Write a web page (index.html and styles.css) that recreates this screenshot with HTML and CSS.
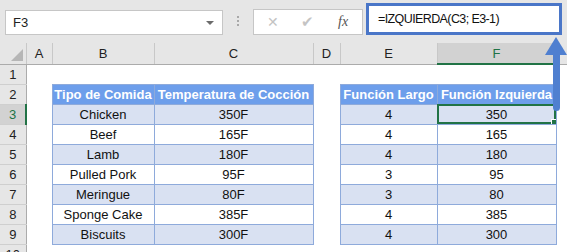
FILE: index.html
```html
<!DOCTYPE html>
<html lang="es">
<head>
  <meta charset="UTF-8">
  <title>IZQUIERDA</title>
  <link rel="stylesheet" href="styles.css">
</head>
<body>
  <div class="toolbar">
    <div class="namebox">
      <span>F3</span>
      <span class="caret"></span>
    </div>
    <div class="grip"><i></i><i></i><i></i></div>
    <div class="buttons">
      <span class="btn cancel">&#x2715;</span>
      <span class="btn ok">&#x2714;</span>
      <span class="btn fx">fx</span>
    </div>
    <div class="formula">=IZQUIERDA(C3; E3-1)</div>
  </div>

  <table class="sheet">
    <colgroup>
      <col class="w-rh"><col class="w-a"><col class="w-b"><col class="w-c">
      <col class="w-d"><col class="w-e"><col class="w-f"><col>
    </colgroup>
    <tr class="colhead">
      <th class="corner"><span class="tri"></span></th>
      <th>A</th><th>B</th><th>C</th><th>D</th><th>E</th><th class="active">F</th><th class="last"></th>
    </tr>
    <tr>
      <th class="rh">1</th><td></td><td></td><td></td><td></td><td></td><td></td><td></td>
    </tr>
    <tr>
      <th class="rh">2</th><td></td>
      <td class="hd">Tipo de Comida</td><td class="hd">Temperatura de Cocción</td>
      <td></td>
      <td class="hd">Función Largo</td><td class="hd">Función Izquierda</td><td></td>
    </tr>
    <tr class="band">
      <th class="rh active">3</th><td></td>
      <td class="t">Chicken</td><td class="t">350F</td><td></td>
      <td class="t">4</td><td class="t sel">350<span class="handle"></span></td><td></td>
    </tr>
    <tr>
      <th class="rh">4</th><td></td>
      <td class="t">Beef</td><td class="t">165F</td><td></td>
      <td class="t">4</td><td class="t">165</td><td></td>
    </tr>
    <tr class="band">
      <th class="rh">5</th><td></td>
      <td class="t">Lamb</td><td class="t">180F</td><td></td>
      <td class="t">4</td><td class="t">180</td><td></td>
    </tr>
    <tr>
      <th class="rh">6</th><td></td>
      <td class="t">Pulled Pork</td><td class="t">95F</td><td></td>
      <td class="t">3</td><td class="t">95</td><td></td>
    </tr>
    <tr class="band">
      <th class="rh">7</th><td></td>
      <td class="t">Meringue</td><td class="t">80F</td><td></td>
      <td class="t">3</td><td class="t">80</td><td></td>
    </tr>
    <tr>
      <th class="rh">8</th><td></td>
      <td class="t">Sponge Cake</td><td class="t">385F</td><td></td>
      <td class="t">4</td><td class="t">385</td><td></td>
    </tr>
    <tr class="band">
      <th class="rh">9</th><td></td>
      <td class="t">Biscuits</td><td class="t">300F</td><td></td>
      <td class="t">4</td><td class="t">300</td><td></td>
    </tr>
    <tr>
      <th class="rh">10</th><td></td><td></td><td></td><td></td><td></td><td></td><td></td>
    </tr>
  </table>

  <!-- arrow pointing from F3 up to the formula -->
  <div class="arrow">
    <span class="head"></span>
    <span class="shaft"></span>
  </div>
</body>
</html>
```

FILE: styles.css
```css
* {
  margin: 0;
  padding: 0;
  box-sizing: border-box;
}

body {
  width: 567px;
  height: 252px;
  overflow: hidden;
  background: #ffffff;
  font-family: "Liberation Sans", Arial, sans-serif;
  color: #000;
  position: relative;
}

/* formula bar */
.toolbar {
  height: 43px;
  background: #e6e6e6;
  display: flex;
  align-items: flex-start;
  padding-left: 5px;
}
.namebox {
  margin-top: 10px;
  width: 218px;
  height: 25px;
  background: #fff;
  border: 1px solid #c6c6c6;
  display: flex;
  align-items: center;
  justify-content: space-between;
  padding: 0 8px 0 7px;
  font-size: 13px;
  color: #222;
}
.caret {
  width: 0;
  height: 0;
  border-left: 4px solid transparent;
  border-right: 4px solid transparent;
  border-top: 4px solid #6b6b6b;
}
.grip {
  width: 30px;
  margin-top: 16px;
  display: flex;
  flex-direction: column;
  align-items: center;
  gap: 2px;
}
.grip i {
  width: 2px;
  height: 2px;
  background: #a8a8a8;
}
.buttons {
  margin-top: 9px;
  width: 110px;
  height: 26px;
  background: #fff;
  border: 1px solid #c6c6c6;
  display: flex;
  align-items: center;
  padding-left: 13px;
}
.btn {
  color: #c4c4c4;
  font-size: 14px;
}
.cancel {
  width: 34px;
}
.ok {
  width: 37px;
  font-size: 15px;
}
.fx {
  color: #555;
  font-family: "Liberation Serif", serif;
  font-style: italic;
  font-size: 14px;
}
.formula {
  margin: 3px 0 0 3px;
  width: 196px;
  height: 32px;
  background: #fff;
  border: 3px solid #4a76c8;
  padding-left: 9px;
  line-height: 26px;
  font-size: 12.5px;
  color: #111;
  letter-spacing: -0.6px;
}

/* worksheet */
.sheet {
  border-collapse: collapse;
  table-layout: fixed;
  width: 567px;
  font-size: 13px;
}
.w-rh { width: 26px; }
.w-a { width: 26px; }
.w-b { width: 102px; }
.w-c { width: 159px; }
.w-d { width: 27px; }
.w-e { width: 97px; }
.w-f { width: 119px; }

.sheet tr {
  height: 20px;
}
.sheet td,
.sheet th {
  padding: 0;
  height: 20px;
  text-align: center;
  white-space: nowrap;
  overflow: hidden;
}

.colhead th {
  height: 21px;
  background: #e6e6e6;
  font-weight: normal;
  font-size: 13px;
  color: #222;
  border-left: 1px solid #c8c8c8;
  border-bottom: 1px solid #ababab;
}
.colhead th.active {
  background: #d2d2d2;
  color: #217346;
  border-bottom: 2px solid #217346;
}
.colhead th.last {
  border-left: 1px solid #c8c8c8;
}
.corner {
  position: relative;
  border-left: none !important;
}
.tri {
  position: absolute;
  right: 3px;
  bottom: 3px;
  width: 0;
  height: 0;
  border-left: 12px solid transparent;
  border-bottom: 12px solid #b6b6b6;
}

.rh {
  background: #e6e6e6;
  font-weight: normal;
  font-size: 13px;
  color: #222;
  border-right: 1px solid #ababab;
  border-bottom: 1px solid #cfcfcf;
}
.rh.active {
  background: #d2d2d2;
  color: #217346;
  border-right: 2px solid #217346;
}

.hd {
  background: #6d9eeb;
  color: #fff;
  font-weight: bold;
  border: 1px solid #8eaadb;
}
.t {
  border: 1px solid #8eaadb;
  color: #111;
}
.band .t {
  background: #d9e1f2;
}

.sel {
  position: relative;
  outline: 2px solid #217346;
  outline-offset: -2px;
}
.handle {
  position: absolute;
  right: -1px;
  bottom: -1px;
  width: 6px;
  height: 6px;
  background: #217346;
  border: 1px solid #fff;
}

/* annotation arrow */
.arrow {
  position: absolute;
  left: 545px;
  top: 37px;
  width: 22px;
  display: flex;
  flex-direction: column;
  align-items: center;
}
.head {
  width: 0;
  height: 0;
  border-left: 11px solid transparent;
  border-right: 11px solid transparent;
  border-bottom: 18px solid #4f7fd0;
}
.shaft {
  width: 7px;
  height: 56px;
  background: #4f7fd0;
  border-radius: 0 0 4px 4px;
}
```
